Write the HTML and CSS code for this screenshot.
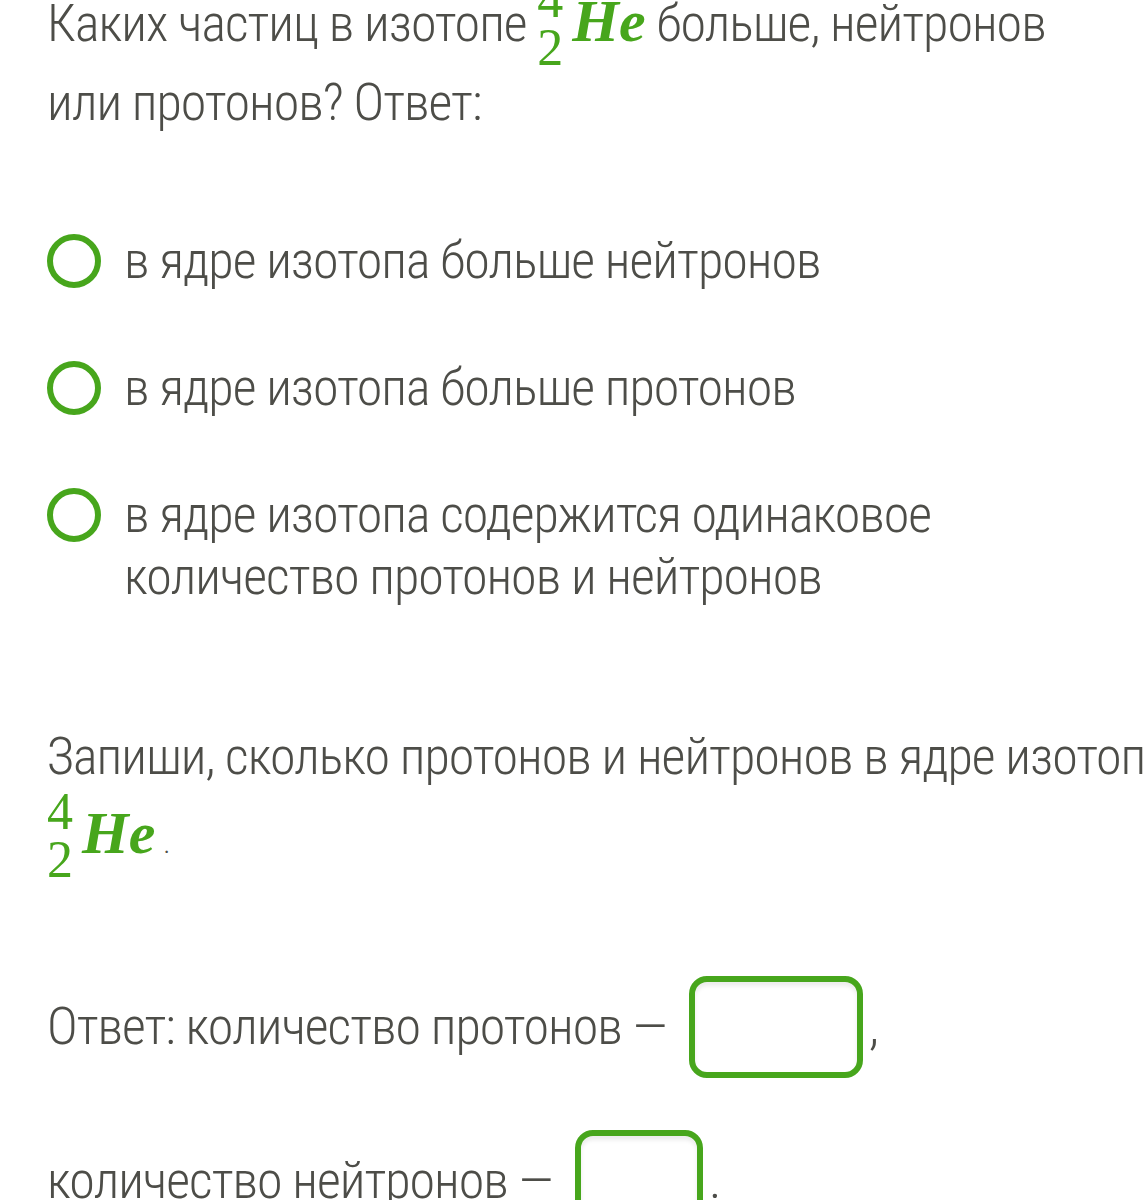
FILE: index.html
```html
<!DOCTYPE html>
<html lang="ru">
<head>
  <meta charset="UTF-8">
  <title>Изотоп гелия</title>
  <link rel="stylesheet" href="styles.css">
</head>
<body>

<div class="task">
  <!-- Вопрос с выбором ответа -->
  <p class="question">
    Каких частиц в изотопе
    <span class="nuclide"><span class="scripts"><span>4</span><span>2</span></span><span class="symbol">He</span></span>
    больше, нейтронов или протонов? Ответ:
  </p>

  <div class="options">
    <label class="option"><span class="radio"></span><span>в ядре изотопа больше нейтронов</span></label>
    <label class="option"><span class="radio"></span><span>в ядре изотопа больше протонов</span></label>
    <label class="option"><span class="radio"></span><span>в ядре изотопа содержится одинаковое количество протонов и нейтронов</span></label>
  </div>

  <!-- Ввод числа частиц -->
  <p class="question second">
    Запиши, сколько протонов и нейтронов в ядре изотопа
    <span class="nuclide"><span class="scripts"><span>4</span><span>2</span></span><span class="symbol">He</span></span><span class="dot">.</span>
  </p>

  <div class="answer">
    <div class="answer-row">Ответ: количество протонов — <span class="field wide"></span>,</div>
    <div class="answer-row">количество нейтронов — <span class="field"></span>.</div>
  </div>
</div>

</body>
</html>
```

FILE: styles.css
```css
/* Базовые стили */
body {
  margin: 0;
  background: #fff;
  color: #4d4d48;
  font-family: "Roboto", "Noto Sans", sans-serif;
  font-weight: 300;
  font-stretch: condensed;
  overflow: hidden;
}

.task {
  width: 1146px;
  padding-left: 47px;
  box-sizing: border-box;
  font-size: 52px;
  line-height: 62px;
  letter-spacing: -1px;
}

p {
  margin: 0;
}

/* Формула изотопа */
.nuclide {
  color: #47a61c;
  font-family: "Liberation Serif", serif;
  font-stretch: normal;
  letter-spacing: 0;
  white-space: nowrap;
}

.scripts {
  display: inline-flex;
  flex-direction: column;
  font-size: 52px;
  line-height: 48px;
  font-weight: 400;
  vertical-align: 24px;
}

.symbol {
  font-size: 60px;
  font-weight: bold;
  font-style: italic;
  margin-left: 9px;
}

.dot {
  margin-left: 8px;
  font-size: 30px;
  color: #4d4d48;
  font-family: "Roboto", sans-serif;
}

.question {
  margin-top: -24px;
  padding-right: 60px;
}

/* Варианты ответа */
.options {
  display: flex;
  flex-direction: column;
  gap: 65px;
  margin-top: 96px;
}

.option {
  display: flex;
  align-items: flex-start;
  gap: 23px;
  padding-right: 180px;
}

.radio {
  flex: none;
  width: 42px;
  height: 42px;
  margin-top: 4px;
  border: 6px solid #47a61c;
  border-radius: 50%;
}

.second {
  margin-top: 118px;
  padding-right: 0;
  width: 1160px;
}

/* Поля ввода */
.answer {
  display: flex;
  flex-direction: column;
  gap: 52px;
  margin-top: 92px;
}

.field {
  display: inline-block;
  width: 162px;
  height: 90px;
  margin: 0 6px 0 12px;
  border: 6px solid #47a61c;
  border-radius: 18px;
  box-shadow: inset 0 4px 4px rgba(0, 0, 0, 0.08);
  vertical-align: -34px;
}

.field:not(.wide) {
  width: 116px;
}
```
